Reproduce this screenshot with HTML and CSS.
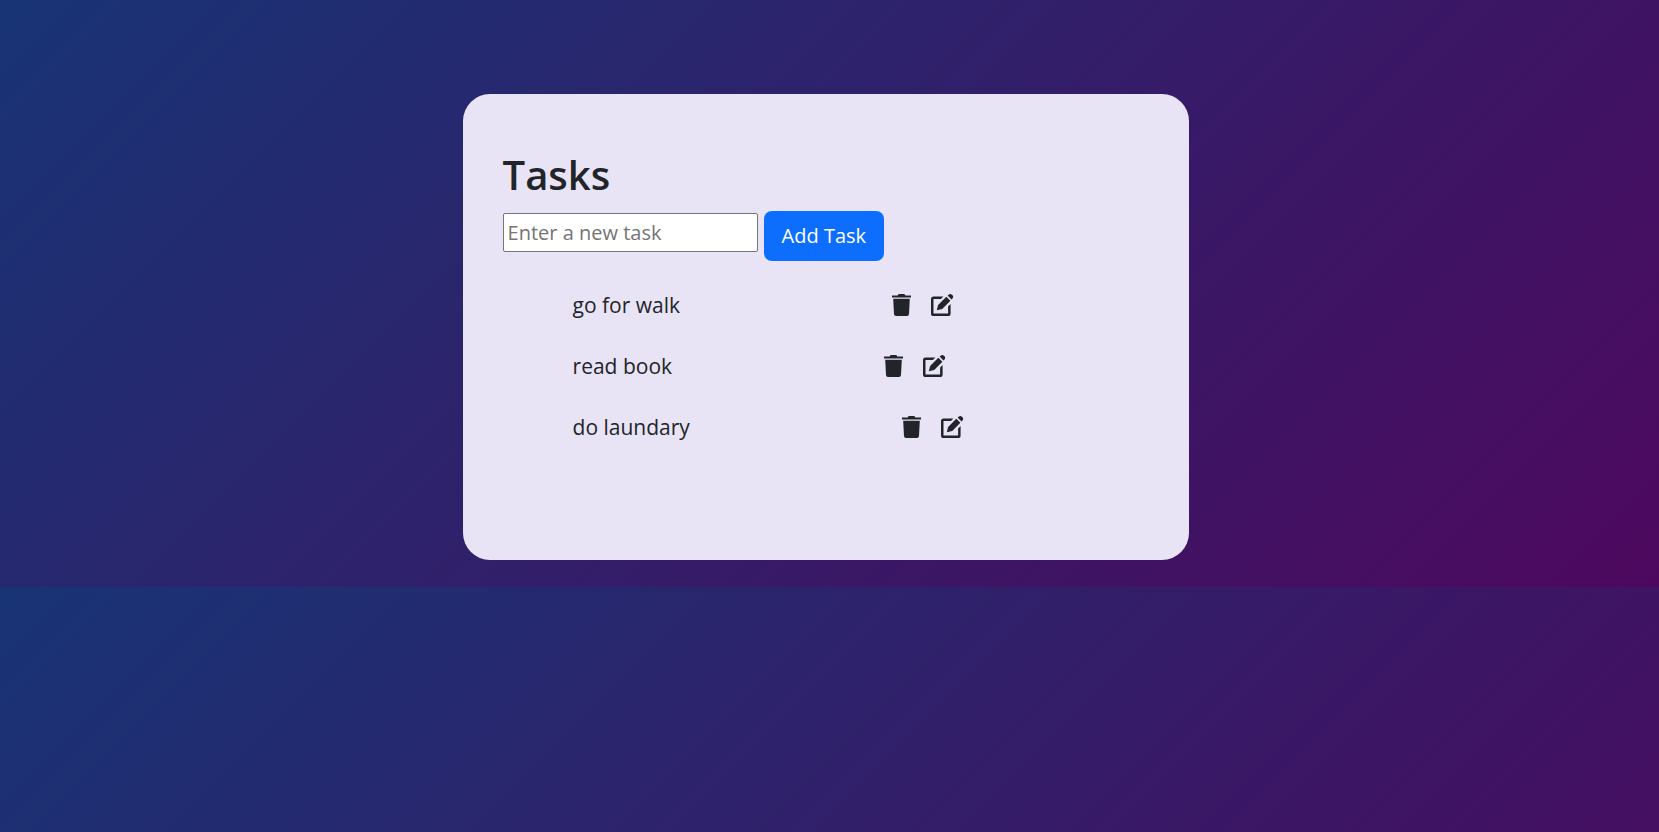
FILE: index.html
```html
<!DOCTYPE html>
<html lang="en">
<head>
<meta charset="utf-8">
<title>Tasks</title>
<link rel="stylesheet" href="styles.css">
</head>
<body>
<svg class="sprite" aria-hidden="true">
  <symbol id="trash" viewBox="0 0 19 22"><path d="M0 1.4h5.6L6.7 0h5.6l1.1 1.4H19v2H0zM1.2 4.8h16.6l-.8 15.2q-.1 2-2 2H4q-1.9 0-2-2z"/></symbol>
  <symbol id="edit" viewBox="0 0 23 22"><path d="M12.4 2.4H2.6Q0 2.4 0 5v14.4Q0 22 2.6 22H17q2.6 0 2.6-2.6V10l-2.5 2.5v7H2.5V4.9h7.4zM5.8 16.3l1.3-5.4 8.2-8.2 4.1 4.1-8.2 8.2zM16.6 1.6l1-.9q1.7-1.4 3.4 0l.5.5q1.4 1.6 0 3.2l-1 1z"/></symbol>
</svg>
<main class="card">
  <h1 class="title">Tasks</h1>
  <form class="task-form">
    <input class="task-input" type="text" placeholder="Enter a new task" aria-label="New task">
    <button class="add-button" type="button">Add Task</button>
  </form>
  <ul class="task-list">
    <li class="task"><span>go for walk</span><div class="actions"><button class="icon-button" type="button" aria-label="Delete"><svg class="trash"><use href="#trash"/></svg></button><button class="icon-button" type="button" aria-label="Edit"><svg class="edit"><use href="#edit"/></svg></button></div></li>
    <li class="task"><span>read book</span><div class="actions"><button class="icon-button" type="button" aria-label="Delete"><svg class="trash"><use href="#trash"/></svg></button><button class="icon-button" type="button" aria-label="Edit"><svg class="edit"><use href="#edit"/></svg></button></div></li>
    <li class="task"><span>do laundary</span><div class="actions"><button class="icon-button" type="button" aria-label="Delete"><svg class="trash"><use href="#trash"/></svg></button><button class="icon-button" type="button" aria-label="Edit"><svg class="edit"><use href="#edit"/></svg></button></div></li>
  </ul>
</main>
</body>
</html>
```
FILE: styles.css
```css
* { box-sizing: border-box; }
html { background: linear-gradient(135deg, #183475, #4d085e); }
body {
  margin: 0;
  padding: 94px 7px 27px 0;
  color: #212529;
  font: 21px/34px "Segoe UI", "Open Sans", "Noto Sans", sans-serif;
}
.sprite { display: none; }
.card {
  width: 44%;
  min-width: 500px;
  margin: 0 auto;
  padding: 54px 40px 103px;
  border-radius: 27px;
  background: #e9e4f5;
}
.title { margin: 0 0 9px; font-size: 40px; font-weight: 600; line-height: 54px; }
.task-form { display: flex; align-items: flex-start; gap: 6px; font-size: 20px; }
.task-input {
  width: 255px;
  height: 39px;
  margin-top: 2px;
  padding: 0 4px;
  border: 1px solid #767676;
  border-radius: 2px;
  background: #fff;
  font: inherit;
}
.task-input::placeholder { color: #757575; opacity: 1; }
.add-button {
  height: 50px;
  padding: 0 18px;
  border: 0;
  border-radius: 8px;
  background: #0d6efd;
  color: #fff;
  font: inherit;
}
.task-list { margin: 13px 0 0; padding: 0 0 0 70px; list-style: none; }
.task { display: flex; align-items: center; gap: 212px; height: 61px; white-space: nowrap; }
.actions { display: flex; gap: 20px; }
.icon-button { display: flex; padding: 0; border: 0; background: none; color: inherit; }
.icon-button svg { height: 22px; fill: currentColor; }
.trash { width: 19px; }
.edit { width: 23px; }
```
